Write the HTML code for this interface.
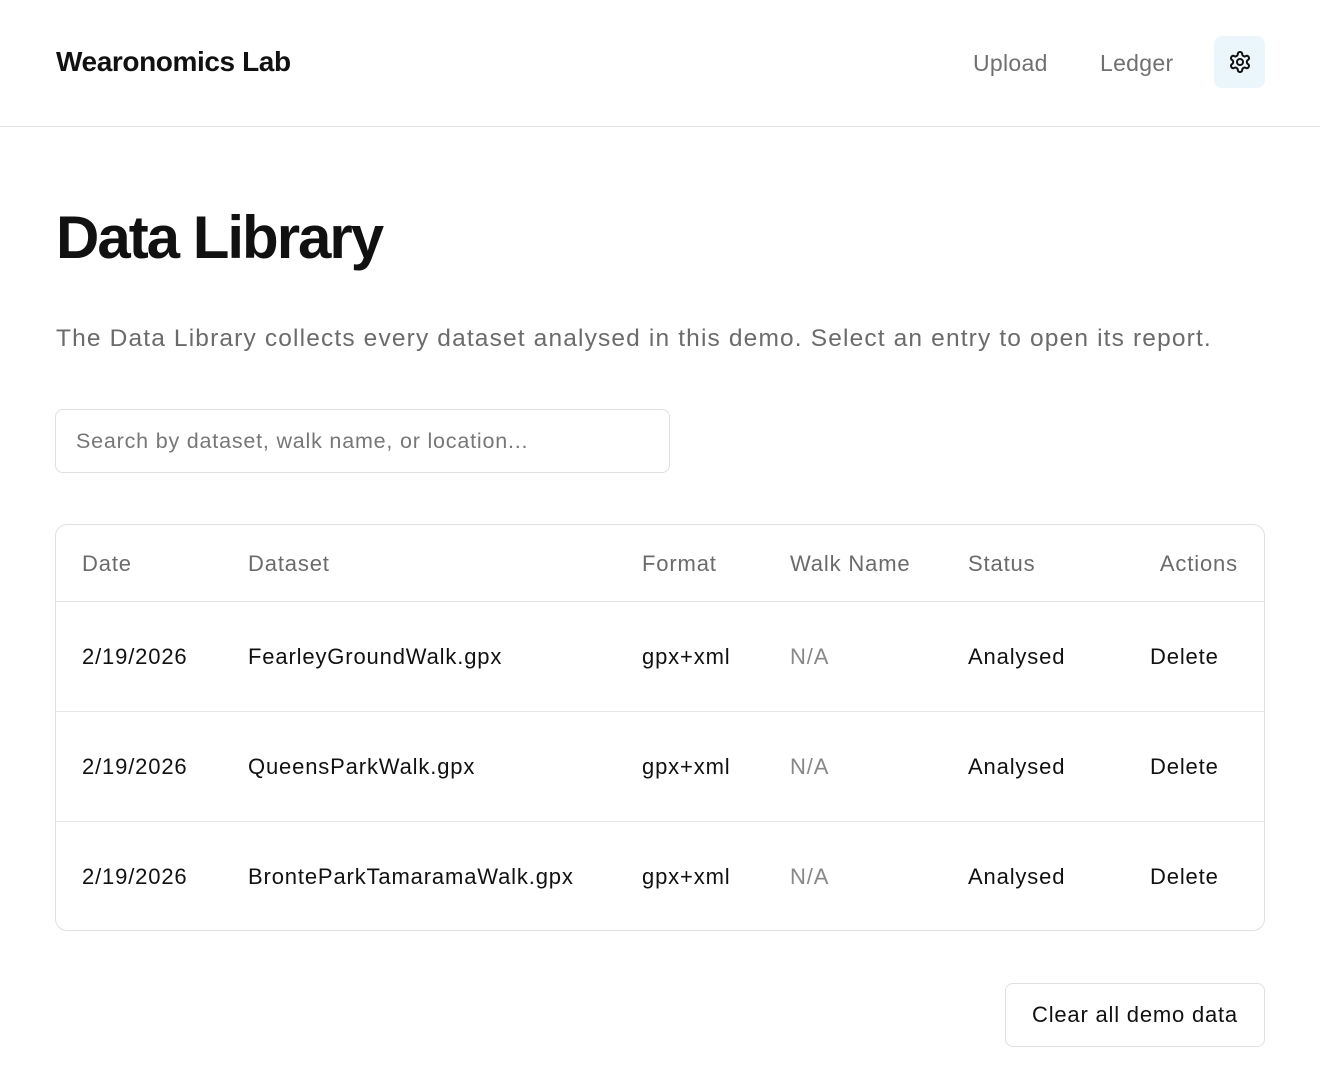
<!DOCTYPE html>
<html><head><meta charset="utf-8"><style>
*{box-sizing:border-box;margin:0;padding:0}
body{width:1320px;height:1076px;background:#fff;font-family:"Liberation Sans",sans-serif;color:#111;position:relative;overflow:hidden}
.hdr{position:absolute;left:0;top:0;width:1320px;height:127px;border-bottom:1px solid #e5e5e5}
.logo{position:absolute;left:56px;top:46px;font-size:28px;font-weight:bold;letter-spacing:-0.4px}
.nav{position:absolute;top:50px;font-size:23px;color:#707070;letter-spacing:0.3px}
.gear{position:absolute;left:1214px;top:36px;width:51px;height:52px;border-radius:8px;background:#eaf6fb;display:flex;align-items:center;justify-content:center}
h1{position:absolute;left:56px;top:203px;font-size:60px;font-weight:bold;letter-spacing:-2px}
.desc{position:absolute;left:56px;top:325px;font-size:24.5px;color:#6b6b6b;letter-spacing:1.15px;white-space:nowrap}
.search{position:absolute;left:55px;top:409px;width:615px;height:64px;border:1px solid #e0e0e0;border-radius:8px;padding:19px 20px;font-size:21.5px;color:#777;letter-spacing:0.8px}
.tbl{position:absolute;left:55px;top:524px;width:1210px;height:407px;border:1px solid #e0e0e0;border-radius:12px}
.row{position:absolute;left:0;width:1208px;border-bottom:1px solid #e5e5e5}
.c{position:absolute;font-size:22px;letter-spacing:0.85px;white-space:nowrap}
.h{color:#6b6b6b}
.btn{position:absolute;left:1005px;top:983px;width:260px;height:64px;border:1px solid #e0e0e0;border-radius:8px;font-size:22px;text-align:center;line-height:62px;letter-spacing:0.8px}
</style></head><body>
<div class="hdr">
<div class="logo">Wearonomics Lab</div>
<div class="nav" style="left:973px">Upload</div>
<div class="nav" style="left:1100px">Ledger</div>
<div class="gear"><svg width="24" height="24" viewBox="0 0 24 24" fill="none" stroke="#111" stroke-width="2" stroke-linecap="round" stroke-linejoin="round"><path d="M12.22 2h-.44a2 2 0 0 0-2 2v.18a2 2 0 0 1-1 1.73l-.43.25a2 2 0 0 1-2 0l-.15-.08a2 2 0 0 0-2.73.73l-.22.38a2 2 0 0 0 .73 2.73l.15.1a2 2 0 0 1 1 1.72v.51a2 2 0 0 1-1 1.740l-.15.09a2 2 0 0 0-.73 2.730l.22.38a2 2 0 0 0 2.73.73l.15-.08a2 2 0 0 1 2 0l.43.25a2 2 0 0 1 1 1.73V20a2 2 0 0 0 2 2h.44a2 2 0 0 0 2-2v-.18a2 2 0 0 1 1-1.73l.43-.25a2 2 0 0 1 2 0l.15.08a2 2 0 0 0 2.73-.73l.22-.39a2 2 0 0 0-.73-2.73l-.15-.08a2 2 0 0 1-1-1.74v-.5a2 2 0 0 1 1-1.74l.15-.09a2 2 0 0 0 .73-2.73l-.22-.38a2 2 0 0 0-2.73-.73l-.15.08a2 2 0 0 1-2 0l-.43-.25a2 2 0 0 1-1-1.73V4a2 2 0 0 0-2-2z"/><circle cx="12" cy="12" r="3"/></svg></div>
</div>
<h1>Data Library</h1>
<div class="desc">The Data Library collects every dataset analysed in this demo. Select an entry to open its report.</div>
<div class="search">Search by dataset, walk name, or location...</div>
<div class="tbl">
<div class="row" style="top:0;height:77px">
<div class="c h" style="left:26px;top:26px">Date</div><div class="c h" style="left:192px;top:26px">Dataset</div><div class="c h" style="left:586px;top:26px">Format</div><div class="c h" style="left:734px;top:26px">Walk Name</div><div class="c h" style="left:912px;top:26px">Status</div><div class="c h" style="right:26px;top:26px">Actions</div>
</div>
<div class="row" style="top:77px;height:110px">
<div class="c" style="left:26px;top:42px">2/19/2026</div><div class="c" style="left:192px;top:42px">FearleyGroundWalk.gpx</div><div class="c" style="left:586px;top:42px">gpx+xml</div><div class="c h" style="left:734px;top:42px;color:#888">N/A</div><div class="c" style="left:912px;top:42px">Analysed</div><div class="c" style="left:1094px;top:42px">Delete</div>
</div>
<div class="row" style="top:187px;height:110px">
<div class="c" style="left:26px;top:42px">2/19/2026</div><div class="c" style="left:192px;top:42px">QueensParkWalk.gpx</div><div class="c" style="left:586px;top:42px">gpx+xml</div><div class="c h" style="left:734px;top:42px;color:#888">N/A</div><div class="c" style="left:912px;top:42px">Analysed</div><div class="c" style="left:1094px;top:42px">Delete</div>
</div>
<div class="row" style="top:297px;height:108px;border-bottom:none">
<div class="c" style="left:26px;top:42px">2/19/2026</div><div class="c" style="left:192px;top:42px">BronteParkTamaramaWalk.gpx</div><div class="c" style="left:586px;top:42px">gpx+xml</div><div class="c h" style="left:734px;top:42px;color:#888">N/A</div><div class="c" style="left:912px;top:42px">Analysed</div><div class="c" style="left:1094px;top:42px">Delete</div>
</div>
</div>
<div class="btn">Clear all demo data</div>
</body></html>
